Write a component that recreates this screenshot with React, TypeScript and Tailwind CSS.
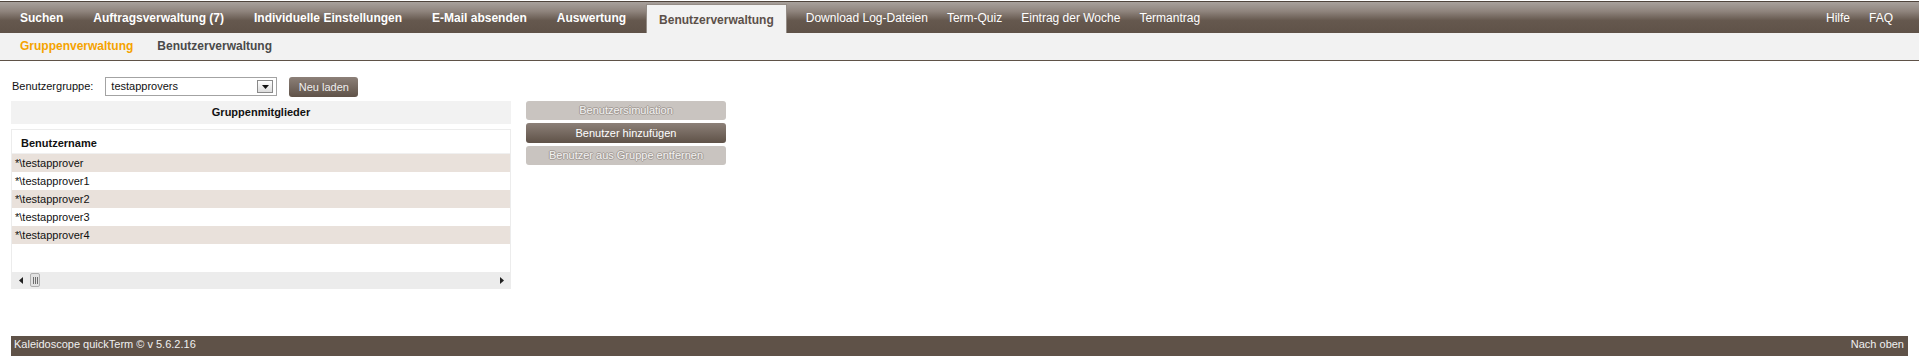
const mainTabs = [
  "Suchen",
  "Auftragsverwaltung (7)",
  "Individuelle Einstellungen",
  "E-Mail absenden",
  "Auswertung",
];

const extraTabs = ["Download Log-Dateien", "Term-Quiz", "Eintrag der Woche", "Termantrag"];

const members = [
  "*\\testapprover",
  "*\\testapprover1",
  "*\\testapprover2",
  "*\\testapprover3",
  "*\\testapprover4",
];

function TopNav() {
  return (
    <div className="mt-px flex h-[32px] items-stretch border-t border-[#4f443c] bg-[linear-gradient(to_bottom,#a8a19c_0%,#8f847d_30%,#65584e_60%,#5f5248_100%)] pl-[5px] pr-[26px] text-[12px]">
      {mainTabs.map((tab) => (
        <span key={tab} className="flex items-center px-[15px] font-bold text-white">
          {tab}
        </span>
      ))}
      <span className="ml-[5px] mt-[2px] flex items-center border border-b-0 border-[#948c86] bg-[#f2f2f2] px-[12px] pt-px font-bold text-[#5c5049]">
        Benutzerverwaltung
      </span>
      <div className="ml-[19px] flex items-center gap-[19px] text-white">
        {extraTabs.map((tab) => (
          <span key={tab}>{tab}</span>
        ))}
      </div>
      <div className="ml-auto flex items-center gap-[19px] text-white">
        <span>Hilfe</span>
        <span>FAQ</span>
      </div>
    </div>
  );
}

function SubNav() {
  return (
    <div className="flex h-[28px] items-center gap-[24px] border-b border-[#5f5248] bg-[#f2f2f2] pb-px pl-[20px] text-[12px] font-bold">
      <span className="text-[#f5a300]">Gruppenverwaltung</span>
      <span className="text-[#4a4a4a]">Benutzerverwaltung</span>
    </div>
  );
}

function GroupSelect() {
  return (
    <div className="flex h-[19px] w-[172px] items-center justify-between border border-[#a3a3a3] bg-white pl-[5px] pr-[3px]">
      <span>testapprovers</span>
      <span className="flex h-[13px] w-[16px] items-center justify-center border border-[#8a8a8a] bg-[linear-gradient(to_bottom,#ffffff,#dcdcdc)]">
        <svg width="7" height="4" viewBox="0 0 7 4">
          <path d="M0 0h7L3.5 4z" fill="#111" />
        </svg>
      </span>
    </div>
  );
}

function Scrollbar() {
  return (
    <div className="flex h-[16px] items-center justify-between bg-[#ececec] pl-[7px] pr-[6px]">
      <div className="flex items-center gap-[7px]">
        <svg width="4" height="7" viewBox="0 0 4 7">
          <path d="M4 0v7L0 3.5z" fill="#222" />
        </svg>
        <span className="flex h-[14px] w-[10px] items-center justify-center gap-px rounded-[2px] border border-[#b0b0b0] bg-[#e2e2e2]">
          <span className="h-[7px] w-px bg-[#6f6f6f]" />
          <span className="h-[7px] w-px bg-[#6f6f6f]" />
          <span className="h-[7px] w-px bg-[#6f6f6f]" />
        </span>
      </div>
      <svg width="4" height="7" viewBox="0 0 4 7">
        <path d="M0 0v7L4 3.5z" fill="#222" />
      </svg>
    </div>
  );
}

function MembersPanel() {
  return (
    <div className="w-[500px]">
      <div className="flex h-[23px] items-center justify-center bg-[#f2f2f2] font-bold text-[#111]">
        Gruppenmitglieder
      </div>
      <div className="mt-[5px] border border-[#ececec] bg-white">
        <div className="h-[24px] border-b border-[#f0f0f0] pl-[9px] pt-[7px] font-bold leading-[13px] text-[#111]">
          Benutzername
        </div>
        {members.map((name, index) => (
          <div
            key={name}
            className={`flex h-[18px] items-center pl-[3px] text-[#111] ${index % 2 === 0 ? "bg-[#e9e1db]" : "bg-white"}`}
          >
            {name}
          </div>
        ))}
        <div className="h-[28px]" />
        <Scrollbar />
      </div>
    </div>
  );
}

function ActionButtons() {
  return (
    <div className="flex w-[200px] flex-col gap-[3px]">
      <div className="flex h-[19px] items-center justify-center rounded-[3px] bg-[#c9c4c0] text-[#f2f2f2] [text-shadow:1px_0_0_#a49c96,-1px_0_0_#a49c96,0_1px_0_#a49c96,0_-1px_0_#a49c96]">
        Benutzersimulation
      </div>
      <div className="flex h-[20px] items-center justify-center rounded-[3px] bg-[linear-gradient(to_bottom,#8c8078,#5f5248)] text-white">
        Benutzer hinzufügen
      </div>
      <div className="flex h-[19px] items-center justify-center rounded-[3px] bg-[#c9c4c0] text-[#f2f2f2] [text-shadow:1px_0_0_#a49c96,-1px_0_0_#a49c96,0_1px_0_#a49c96,0_-1px_0_#a49c96]">
        Benutzer aus Gruppe entfernen
      </div>
    </div>
  );
}

export default function App() {
  return (
    <div className="min-h-[356px] bg-white font-['Liberation_Sans',Arial,sans-serif]">
      <TopNav />
      <SubNav />

      <div className="px-[11px] pt-[16px] text-[11px] text-[#111]">
        <div className="flex items-start gap-[12px] pl-px">
          <span className="flex h-[19px] items-center">Benutzergruppe:</span>
          <GroupSelect />
          <button className="flex h-[20px] w-[69px] items-center justify-center rounded-[3px] bg-[linear-gradient(to_bottom,#8c8078,#5f5248)] text-[#eeeeee]">
            Neu laden
          </button>
        </div>

        <div className="mt-[4px] flex items-start gap-[15px]">
          <MembersPanel />
          <ActionButtons />
        </div>
      </div>

      <div className="mx-[11px] mt-[47px] flex h-[20px] justify-between bg-[#5f5248] pl-[3px] pr-[4px] pt-[2px] text-[11px] leading-[13px] text-[#f0f0f0]">
        <span>Kaleidoscope quickTerm © v 5.6.2.16</span>
        <span>Nach oben</span>
      </div>
    </div>
  );
}
